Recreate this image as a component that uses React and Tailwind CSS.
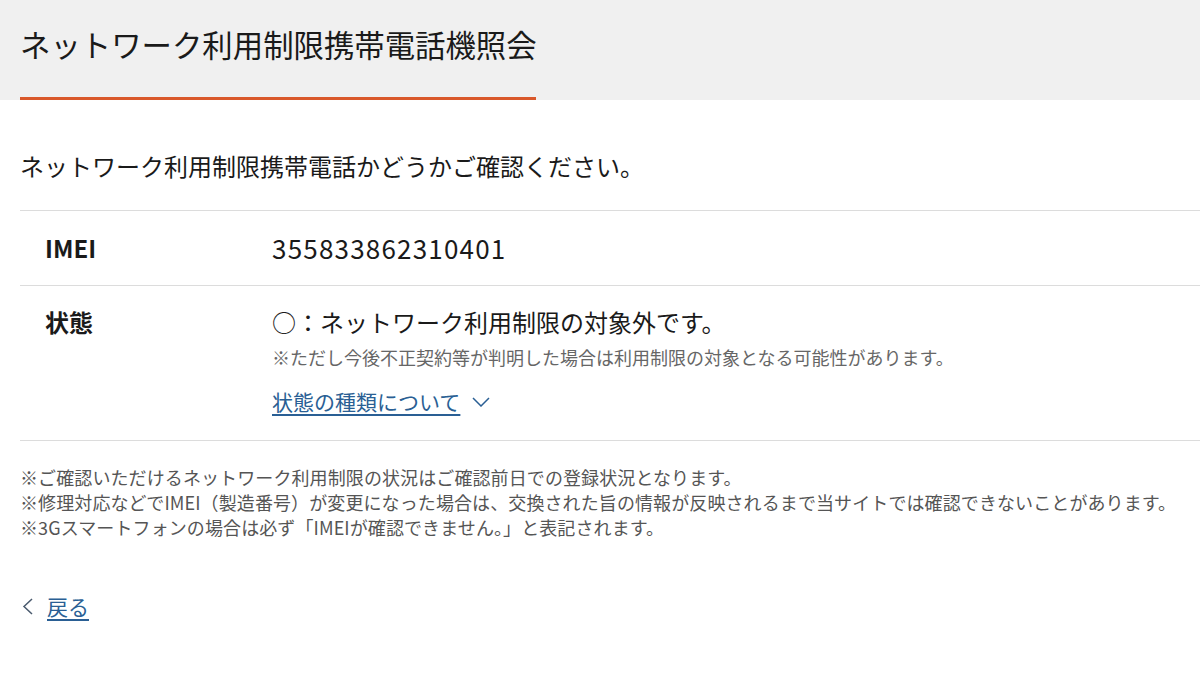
const font = { fontFamily: '"Noto Sans CJK JP", "Noto Sans", sans-serif' };

const ChevronDown = () => (
  <svg width="18" height="10" viewBox="0 0 18 10" fill="none" className="ml-[12px] mt-[2px]">
    <path d="M1 1l8 8 8-8" stroke="#2a5f94" strokeWidth="1.5" />
  </svg>
);

const ChevronLeft = () => (
  <svg width="11" height="17" viewBox="0 0 11 17" fill="none">
    <path d="M10 1L2 8.5 10 16" stroke="#4a5a6e" strokeWidth="1.5" />
  </svg>
);

export default function App() {
  return (
    <div className="w-[1200px] h-[687px] bg-white text-[#1a1a1a]" style={font}>
      <div className="bg-[#f0f0f0] h-[100px] pl-5">
        <div className="inline-flex h-full items-center pb-[10px] border-b-[3px] border-[#d9582b] w-[516px]">
          <h1 className="text-[30.4px] leading-[40px] font-normal whitespace-nowrap">ネットワーク利用制限携帯電話機照会</h1>
        </div>
      </div>

      <div className="pl-5">
        <p className="text-[24px] leading-[36px] mt-[48px] mb-[26px]">ネットワーク利用制限携帯電話かどうかご確認ください。</p>

        <div className="border-t border-[#dcdcdc]">
          <div className="flex py-[19px] border-b border-[#dcdcdc]">
            <div className="w-[252px] pl-[25px] text-[24px] leading-[36px] font-bold">IMEI</div>
            <div className="text-[26px] leading-[36px] tracking-[1.2px]">355833862310401</div>
          </div>

          <div className="flex pt-[18px] pb-[24px] border-b border-[#dcdcdc]">
            <div className="w-[252px] pl-[25px] text-[24px] leading-[36px] font-bold">状態</div>
            <div className="flex flex-col">
              <p className="text-[24px] leading-[36px]">○：ネットワーク利用制限の対象外です。</p>
              <p className="text-[18px] leading-[26px] mt-[4px] text-[#666]">※ただし今後不正契約等が判明した場合は利用制限の対象となる可能性があります。</p>
              <div className="flex items-center mt-[16px]">
                <a className="text-[21px] leading-[30px] text-[#2a5f94] underline underline-offset-[4px]">状態の種類について</a>
                <ChevronDown />
              </div>
            </div>
          </div>
        </div>

        <div className="mt-[24px] text-[18px] leading-[25px] text-[#555] tracking-[0.1px]">
          <p>※ご確認いただけるネットワーク利用制限の状況はご確認前日での登録状況となります。</p>
          <p>※修理対応などでIMEI（製造番号）が変更になった場合は、交換された旨の情報が反映されるまで当サイトでは確認できないことがあります。</p>
          <p>※3Gスマートフォンの場合は必ず「IMEIが確認できません。」と表記されます。</p>
        </div>

        <div className="flex items-center mt-[51px] pl-[2px] gap-[14px]">
          <ChevronLeft />
          <a className="text-[21px] leading-[30px] text-[#2a5f94] underline underline-offset-[4px]">戻る</a>
        </div>
      </div>
    </div>
  );
}
